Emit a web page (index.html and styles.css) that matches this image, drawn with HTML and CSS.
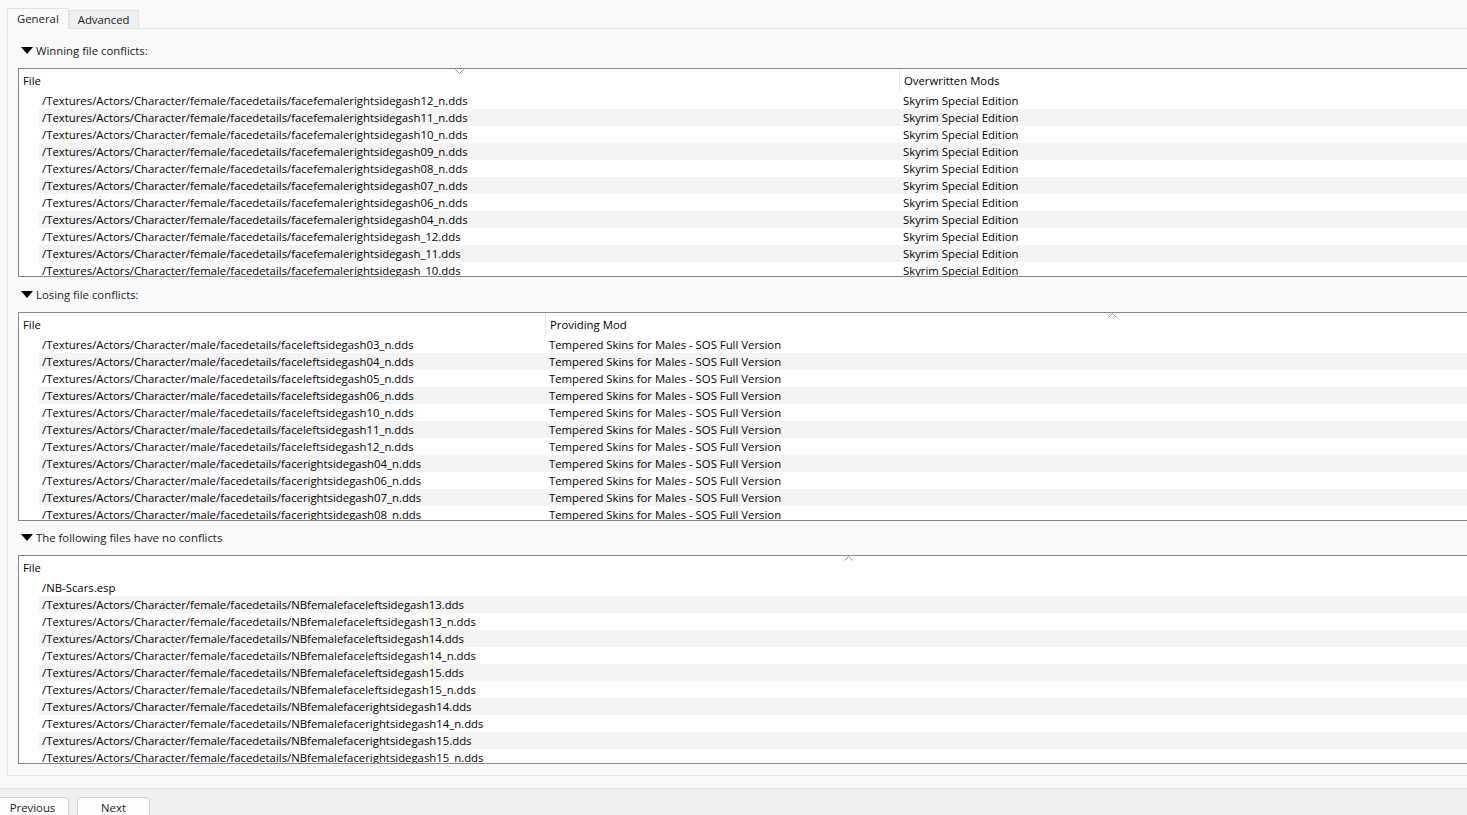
FILE: index.html
```html
<!DOCTYPE html>
<html lang="en">
<head>
    <meta charset="UTF-8">
    <meta name="viewport" content="width=device-width, initial-scale=1.0">
    <title>Conflicts</title>
    <link rel="stylesheet" href="styles.css">
</head>
<body>
    <div class="tabs">
        <div class="tab active">General</div>
        <div class="tab">Advanced</div>
    </div>

    <div class="pane">
        <!-- Winning conflicts -->
        <div class="group-title"><span class="arrow"></span>Winning file conflicts:</div>
        <div class="tree tree-winning">
            <div class="tree-head">
                <div class="head-cell">File
                    <svg class="sort" width="9" height="5" viewBox="0 0 9 5"><polyline points="0.5,0.5 4.5,4.5 8.5,0.5" fill="none" stroke="#8a8f96" stroke-width="1"/></svg>
                </div>
                <div class="head-cell">Overwritten Mods</div>
            </div>
            <div class="tree-body">
                <div class="row"><div class="cell">/Textures/Actors/Character/female/facedetails/facefemalerightsidegash12_n.dds</div><div class="cell">Skyrim Special Edition</div></div>
                <div class="row"><div class="cell">/Textures/Actors/Character/female/facedetails/facefemalerightsidegash11_n.dds</div><div class="cell">Skyrim Special Edition</div></div>
                <div class="row"><div class="cell">/Textures/Actors/Character/female/facedetails/facefemalerightsidegash10_n.dds</div><div class="cell">Skyrim Special Edition</div></div>
                <div class="row"><div class="cell">/Textures/Actors/Character/female/facedetails/facefemalerightsidegash09_n.dds</div><div class="cell">Skyrim Special Edition</div></div>
                <div class="row"><div class="cell">/Textures/Actors/Character/female/facedetails/facefemalerightsidegash08_n.dds</div><div class="cell">Skyrim Special Edition</div></div>
                <div class="row"><div class="cell">/Textures/Actors/Character/female/facedetails/facefemalerightsidegash07_n.dds</div><div class="cell">Skyrim Special Edition</div></div>
                <div class="row"><div class="cell">/Textures/Actors/Character/female/facedetails/facefemalerightsidegash06_n.dds</div><div class="cell">Skyrim Special Edition</div></div>
                <div class="row"><div class="cell">/Textures/Actors/Character/female/facedetails/facefemalerightsidegash04_n.dds</div><div class="cell">Skyrim Special Edition</div></div>
                <div class="row"><div class="cell">/Textures/Actors/Character/female/facedetails/facefemalerightsidegash_12.dds</div><div class="cell">Skyrim Special Edition</div></div>
                <div class="row"><div class="cell">/Textures/Actors/Character/female/facedetails/facefemalerightsidegash_11.dds</div><div class="cell">Skyrim Special Edition</div></div>
                <div class="row"><div class="cell">/Textures/Actors/Character/female/facedetails/facefemalerightsidegash_10.dds</div><div class="cell">Skyrim Special Edition</div></div>
            </div>
        </div>

        <!-- Losing conflicts -->
        <div class="group-title"><span class="arrow"></span>Losing file conflicts:</div>
        <div class="tree tree-losing">
            <div class="tree-head">
                <div class="head-cell">File</div>
                <div class="head-cell">Providing Mod
                    <svg class="sort" width="9" height="5" viewBox="0 0 9 5"><polyline points="0.5,4.5 4.5,0.5 8.5,4.5" fill="none" stroke="#8a8f96" stroke-width="1"/></svg>
                </div>
            </div>
            <div class="tree-body">
                <div class="row"><div class="cell">/Textures/Actors/Character/male/facedetails/faceleftsidegash03_n.dds</div><div class="cell">Tempered Skins for Males - SOS Full Version</div></div>
                <div class="row"><div class="cell">/Textures/Actors/Character/male/facedetails/faceleftsidegash04_n.dds</div><div class="cell">Tempered Skins for Males - SOS Full Version</div></div>
                <div class="row"><div class="cell">/Textures/Actors/Character/male/facedetails/faceleftsidegash05_n.dds</div><div class="cell">Tempered Skins for Males - SOS Full Version</div></div>
                <div class="row"><div class="cell">/Textures/Actors/Character/male/facedetails/faceleftsidegash06_n.dds</div><div class="cell">Tempered Skins for Males - SOS Full Version</div></div>
                <div class="row"><div class="cell">/Textures/Actors/Character/male/facedetails/faceleftsidegash10_n.dds</div><div class="cell">Tempered Skins for Males - SOS Full Version</div></div>
                <div class="row"><div class="cell">/Textures/Actors/Character/male/facedetails/faceleftsidegash11_n.dds</div><div class="cell">Tempered Skins for Males - SOS Full Version</div></div>
                <div class="row"><div class="cell">/Textures/Actors/Character/male/facedetails/faceleftsidegash12_n.dds</div><div class="cell">Tempered Skins for Males - SOS Full Version</div></div>
                <div class="row"><div class="cell">/Textures/Actors/Character/male/facedetails/facerightsidegash04_n.dds</div><div class="cell">Tempered Skins for Males - SOS Full Version</div></div>
                <div class="row"><div class="cell">/Textures/Actors/Character/male/facedetails/facerightsidegash06_n.dds</div><div class="cell">Tempered Skins for Males - SOS Full Version</div></div>
                <div class="row"><div class="cell">/Textures/Actors/Character/male/facedetails/facerightsidegash07_n.dds</div><div class="cell">Tempered Skins for Males - SOS Full Version</div></div>
                <div class="row"><div class="cell">/Textures/Actors/Character/male/facedetails/facerightsidegash08_n.dds</div><div class="cell">Tempered Skins for Males - SOS Full Version</div></div>
            </div>
        </div>

        <!-- Files without conflicts -->
        <div class="group-title group-last"><span class="arrow"></span>The following files have no conflicts</div>
        <div class="tree tree-single">
            <div class="tree-head">
                <div class="head-cell">File
                    <svg class="sort" width="9" height="5" viewBox="0 0 9 5"><polyline points="0.5,4.5 4.5,0.5 8.5,4.5" fill="none" stroke="#8a8f96" stroke-width="1"/></svg>
                </div>
            </div>
            <div class="tree-body">
                <div class="row"><div class="cell">/NB-Scars.esp</div></div>
                <div class="row"><div class="cell">/Textures/Actors/Character/female/facedetails/NBfemalefaceleftsidegash13.dds</div></div>
                <div class="row"><div class="cell">/Textures/Actors/Character/female/facedetails/NBfemalefaceleftsidegash13_n.dds</div></div>
                <div class="row"><div class="cell">/Textures/Actors/Character/female/facedetails/NBfemalefaceleftsidegash14.dds</div></div>
                <div class="row"><div class="cell">/Textures/Actors/Character/female/facedetails/NBfemalefaceleftsidegash14_n.dds</div></div>
                <div class="row"><div class="cell">/Textures/Actors/Character/female/facedetails/NBfemalefaceleftsidegash15.dds</div></div>
                <div class="row"><div class="cell">/Textures/Actors/Character/female/facedetails/NBfemalefaceleftsidegash15_n.dds</div></div>
                <div class="row"><div class="cell">/Textures/Actors/Character/female/facedetails/NBfemalefacerightsidegash14.dds</div></div>
                <div class="row"><div class="cell">/Textures/Actors/Character/female/facedetails/NBfemalefacerightsidegash14_n.dds</div></div>
                <div class="row"><div class="cell">/Textures/Actors/Character/female/facedetails/NBfemalefacerightsidegash15.dds</div></div>
                <div class="row"><div class="cell">/Textures/Actors/Character/female/facedetails/NBfemalefacerightsidegash15_n.dds</div></div>
            </div>
        </div>
    </div>

    <div class="footer">
        <button class="btn btn-prev">Previous</button>
        <button class="btn">Next</button>
    </div>
</body>
</html>
```

FILE: styles.css
```css
html, body {
    margin: 0;
    padding: 0;
}
body {
    width: 1467px;
    height: 815px;
    overflow: hidden;
    background-color: #f9f9f9;
    font-family: "Open Sans", "Noto Sans", sans-serif;
    font-size: 11.35px;
    color: #000;
}

/* tab strip */
.tabs {
    display: flex;
    align-items: flex-end;
    padding: 8px 0 0 7px;
    height: 20px;
}
.tab {
    box-sizing: border-box;
    height: 18px;
    line-height: 17px;
    padding: 0 8px;
    border: 1px solid #e3e3e3;
    border-bottom: none;
    background-color: #f0f0f0;
    color: #1a1a1a;
}
.tab.active {
    position: relative;
    z-index: 1;
    height: 21px;
    line-height: 20px;
    padding: 0 9px;
    margin-bottom: -1px;
    background-color: #f9f9f9;
}

/* tab page */
.pane {
    width: 1660px;
    margin-left: 7px;
    padding: 10px 10px 11px 10px;
    border: 1px solid #e5e5e5;
    background-color: #f9f9f9;
}
.group-title {
    display: flex;
    align-items: center;
    height: 22px;
    margin-bottom: 7px;
    color: #1a1a1a;
}
.tree + .group-title {
    margin-top: 6px;
}
.tree + .group-last {
    margin-top: 5px;
}
.arrow {
    width: 0;
    height: 0;
    margin: 0 3px 0 3px;
    border-left: 6.5px solid transparent;
    border-right: 6.5px solid transparent;
    border-top: 7px solid #000;
}

/* tree views */
.tree {
    height: 207px;
    border: 1px solid #828790;
    background-color: #fff;
    overflow: hidden;
}
.tree-head {
    display: grid;
    height: 23px;
}
.head-cell {
    position: relative;
    line-height: 23px;
    padding-left: 4px;
    white-space: nowrap;
}
.head-cell + .head-cell {
    border-left: 1px solid #e5e5e5;
}
.sort {
    position: absolute;
    top: 0;
    left: 50%;
    margin-left: -4px;
}
.tree-body {
    height: 184px;
    overflow: hidden;
}
.row {
    display: grid;
    height: 17px;
    margin-left: 20px;
    line-height: 17px;
}
.row:nth-child(even) {
    background-color: #f4f4f4;
}
.cell {
    padding-left: 3px;
    white-space: nowrap;
    overflow: hidden;
}
.cell + .cell {
    padding-left: 4px;
}

.tree-winning .tree-head { grid-template-columns: 880px 1fr; }
.tree-winning .row { grid-template-columns: 860px 1fr; }
.tree-losing .tree-head { grid-template-columns: 526px 1fr; }
.tree-losing .row { grid-template-columns: 506px 1fr; }
.tree-single .tree-head,
.tree-single .row { grid-template-columns: 1fr; }

/* dialog buttons */
.footer {
    margin-top: 12px;
    height: 40px;
    border-top: 1px solid #e3e3e3;
    background-color: #f0f0f0;
    padding-top: 8px;
    display: flex;
    gap: 8px;
}
.btn {
    width: 73px;
    height: 30px;
    padding: 0 0 10px 0;
    border: 1px solid #d0d0d0;
    border-radius: 4px;
    background-color: #fdfdfd;
    font-family: inherit;
    font-size: 11.35px;
    color: #1a1a1a;
}
.btn-prev {
    margin-left: -4px;
}
```
